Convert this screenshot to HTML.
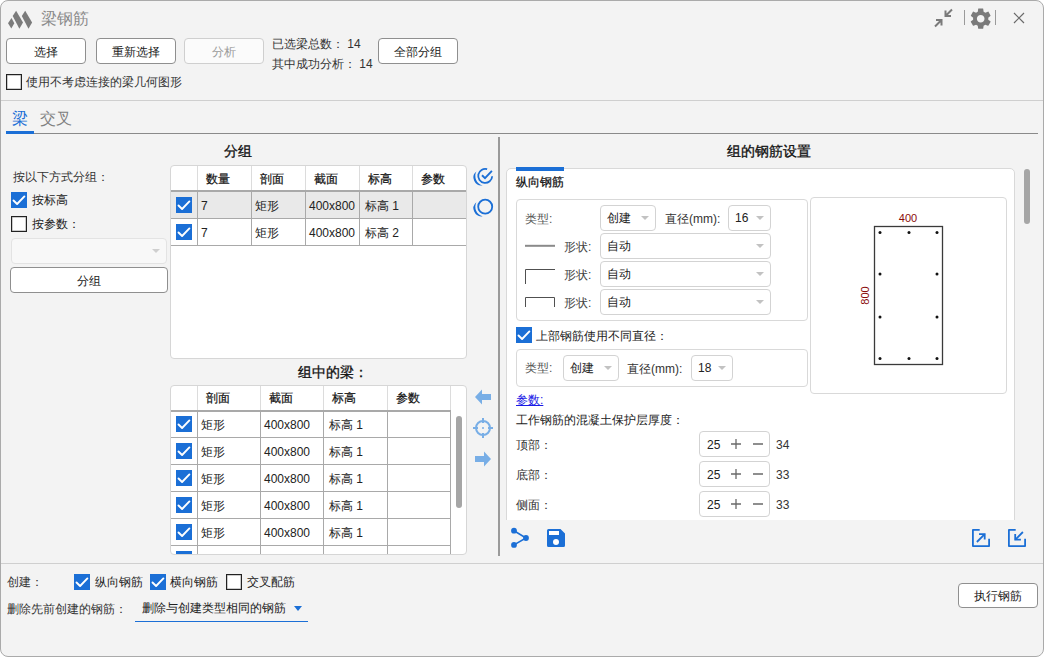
<!DOCTYPE html>
<html><head><meta charset="utf-8">
<style>
html,body{margin:0;padding:0;background:#fff;width:1044px;height:657px;overflow:hidden}
body{font-family:"Liberation Sans",sans-serif;font-size:12px;color:#1f1f1f;position:relative}
.a{position:absolute}
.t{position:absolute;white-space:nowrap;line-height:16px}
#win{position:absolute;left:0;top:0;width:1042px;height:655px;background:#f3f3f3;border:1px solid #aaaaaa;border-radius:8px;overflow:hidden}
.btn{position:absolute;box-sizing:border-box;background:#fff;border:1px solid #8f8f8f;border-radius:4px;text-align:center;line-height:24px;padding-top:1px;font-size:12px;color:#1a1a1a}
.btn.dis{border-color:#cfcfcf;background:#fbfbfb;color:#9a9a9a}
.cb{position:absolute;box-sizing:border-box;width:16px;height:16px;border:1px solid #222;box-shadow:inset 0 0 0 0.5px #999;background:#fff}
.cb.on{background:#1b6fd6;border:none;box-shadow:none}
.cb.on svg{position:absolute;left:0;top:0}
.hl{position:absolute;height:1px;background:#cfcfcf}
.card{position:absolute;box-sizing:border-box;background:#fff;border:1px solid #d9d9d9;border-radius:4px}
.combo{position:absolute;box-sizing:border-box;background:#fff;border:1px solid #d3d3d3;border-radius:4px;line-height:23px;padding-left:6px;padding-top:1px;color:#222}
.arr{position:absolute;top:10px;width:0;height:0;border-left:4px solid transparent;border-right:4px solid transparent;border-top:4px solid #c2c2c2}
.grid{position:absolute;box-sizing:border-box;background:#fff;border:1px solid #d6d6d6;border-radius:4px;overflow:hidden}
.vl{position:absolute;width:1px;background:#a9a9a9}
.hr{position:absolute;height:1px;background:#a9a9a9}
.bold{font-weight:bold}
</style></head><body>
<div id="win">
</div>
<svg class="a" style="left:7px;top:9.5px" width="27" height="20" viewBox="-1 0 27 20">
<path d="M0 13.3 L3.5 7.9 L6.3 13.2 L3.3 18.6 Z" fill="#7b7b7b"/>
<path d="M8.1 0.8 L4.7 6.1 L11.4 18.8 L15 12.6 Z" fill="#7b7b7b"/>
<path d="M17.2 0.8 L13.8 6.1 L20.5 18.8 L24.1 12.6 Z" fill="#7b7b7b"/>
</svg>
<div class="t" style="left:41px;top:10px;font-size:16px;line-height:18px;color:#8a8a8a">梁钢筋</div>
<svg class="a" style="left:933px;top:8px" width="20" height="20" viewBox="0 0 20 20">
<path d="M19 1.5 L13 7.5 M12.5 2.5 V8 H18" fill="none" stroke="#7a7a7a" stroke-width="2"/>
<path d="M2 18.5 L8 12.5 M3 12 H8.5 V17.5" fill="none" stroke="#7a7a7a" stroke-width="2"/>
</svg>
<div class="a" style="left:964px;top:10px;width:1px;height:15px;background:#9a9a9a"></div>
<svg class="a" style="left:967.7px;top:5.7px" width="25.4" height="25.4" viewBox="0 0 24 24">
<path fill="#7a7a7a" d="M19.14 12.94c.04-.3.06-.61.06-.94 0-.32-.02-.64-.07-.94l2.03-1.58c.18-.14.23-.41.12-.61l-1.92-3.32c-.12-.22-.37-.29-.59-.22l-2.39.96c-.5-.38-1.03-.7-1.62-.94l-.36-2.54c-.04-.24-.24-.41-.48-.41h-3.84c-.24 0-.43.17-.47.41l-.36 2.54c-.59.24-1.13.57-1.62.94l-2.39-.96c-.22-.08-.47 0-.59.22L2.74 8.87c-.12.21-.08.47.12.61l2.03 1.58c-.05.3-.09.63-.09.94s.02.64.07.94l-2.03 1.58c-.18.14-.23.41-.12.61l1.92 3.32c.12.22.37.29.59.22l2.390-.96c.5.38 1.03.7 1.62.94l.36 2.54c.05.24.24.41.48.41h3.84c.24 0 .44-.17.47-.41l.36-2.54c.59-.24 1.13-.56 1.62-.94l2.39.96c.22.08.47 0 .59-.22l1.92-3.32c.12-.22.07-.47-.12-.61l-2.01-1.58zM12 15.6c-1.98 0-3.6-1.62-3.6-3.6s1.62-3.6 3.6-3.6 3.6 1.62 3.6 3.6-1.62 3.6-3.6 3.6z"/>
</svg>
<div class="a" style="left:995px;top:10px;width:1px;height:15px;background:#9a9a9a"></div>
<svg class="a" style="left:1013px;top:12px" width="12" height="12" viewBox="0 0 12 12">
<path d="M1 1 L11 11 M11 1 L1 11" stroke="#6a6a6a" stroke-width="1.2" fill="none"/>
</svg>
<div class="btn" style="left:6px;top:38px;width:80px;height:26px">选择</div>
<div class="btn" style="left:96px;top:38px;width:80px;height:26px">重新选择</div>
<div class="btn dis" style="left:184px;top:38px;width:80px;height:26px">分析</div>
<div class="t" style="left:272px;top:36px;color:#333">已选梁总数： 14</div>
<div class="t" style="left:272px;top:56px;color:#333">其中成功分析： 14</div>
<div class="btn" style="left:378px;top:38px;width:80px;height:26px">全部分组</div>
<div class="cb" style="left:6px;top:74px"></div>
<div class="t" style="left:26px;top:74px;color:#333">使用不考虑连接的梁几何图形</div>
<div class="hl" style="left:1px;top:100px;width:1042px"></div>
<div class="t" style="left:12px;top:110px;font-size:16px;line-height:18px;color:#1b6fd6">梁</div>
<div class="t" style="left:40px;top:110px;font-size:16px;line-height:18px;color:#808080">交叉</div>
<div class="a" style="left:6px;top:133px;width:1032px;height:1px;background:#8a8a8a"></div>
<div class="a" style="left:6px;top:131px;width:28px;height:3px;background:#1b6fd6"></div>
<div class="t bold" style="left:224px;top:143px;font-size:13.7px;line-height:18px;color:#111;font-weight:400;-webkit-text-stroke:0.3px #111">分组</div>
<div class="t" style="left:13px;top:169px;color:#333">按以下方式分组：</div>
<div class="cb on" style="left:11px;top:192px"><svg width="16" height="16" viewBox="0 0 16 16"><path d="M2.5 8.5 L6.1 12 L13.4 4.4" fill="none" stroke="#fff" stroke-width="1.9" stroke-linecap="round" stroke-linejoin="round"/></svg></div>
<div class="t" style="left:32px;top:192px;color:#222">按标高</div>
<div class="cb" style="left:11px;top:216px"></div>
<div class="t" style="left:32px;top:216px;color:#222">按参数：</div>
<div class="combo" style="left:11px;top:238px;width:156px;height:26px;background:#f8f8f8;border-color:#e3e3e3"><div class="arr" style="left:140px;top:10px;border-top-color:#cfcfcf"></div></div>
<div class="btn" style="left:10px;top:267px;width:158px;height:26px">分组</div>
<div class="grid" style="left:170px;top:165px;width:297px;height:194px">
<div class="vl" style="left:26px;top:0;height:25px;background:#dcdcdc"></div>
<div class="vl" style="left:80px;top:0;height:25px;background:#dcdcdc"></div>
<div class="vl" style="left:134px;top:0;height:25px;background:#dcdcdc"></div>
<div class="vl" style="left:188px;top:0;height:25px;background:#dcdcdc"></div>
<div class="vl" style="left:241px;top:0;height:25px;background:#dcdcdc"></div>
<div class="hr" style="left:0;top:24px;width:296px;height:2px;background:#a9a9a9"></div>
<div class="a" style="left:0;top:26px;width:296px;height:26px;background:#e9e9e9"></div>
<div class="hr" style="left:0;top:52px;width:296px"></div>
<div class="hr" style="left:0;top:79px;width:296px"></div>
<div class="vl" style="left:26px;top:25px;height:55px"></div>
<div class="vl" style="left:80px;top:25px;height:55px"></div>
<div class="vl" style="left:134px;top:25px;height:55px"></div>
<div class="vl" style="left:188px;top:25px;height:55px"></div>
<div class="vl" style="left:241px;top:25px;height:55px"></div>
<div class="vl" style="left:295px;top:25px;height:55px"></div>
</div>
<div class="t" style="left:206px;top:171px;color:#111;-webkit-text-stroke:0.2px #111">数量</div>
<div class="t" style="left:260px;top:171px;color:#111;-webkit-text-stroke:0.2px #111">剖面</div>
<div class="t" style="left:314px;top:171px;color:#111;-webkit-text-stroke:0.2px #111">截面</div>
<div class="t" style="left:368px;top:171px;color:#111;-webkit-text-stroke:0.2px #111">标高</div>
<div class="t" style="left:421px;top:171px;color:#111;-webkit-text-stroke:0.2px #111">参数</div>
<div class="cb on" style="left:176px;top:197px"><svg width="16" height="16" viewBox="0 0 16 16"><path d="M2.5 8.5 L6.1 12 L13.4 4.4" fill="none" stroke="#fff" stroke-width="1.9" stroke-linecap="round" stroke-linejoin="round"/></svg></div>
<div class="t" style="left:201px;top:198px;color:#222">7</div>
<div class="t" style="left:255px;top:198px;color:#222">矩形</div>
<div class="t" style="left:309px;top:198px;color:#222">400x800</div>
<div class="t" style="left:365px;top:198px;color:#222">标高 1</div>
<div class="cb on" style="left:176px;top:224px"><svg width="16" height="16" viewBox="0 0 16 16"><path d="M2.5 8.5 L6.1 12 L13.4 4.4" fill="none" stroke="#fff" stroke-width="1.9" stroke-linecap="round" stroke-linejoin="round"/></svg></div>
<div class="t" style="left:201px;top:225px;color:#222">7</div>
<div class="t" style="left:255px;top:225px;color:#222">矩形</div>
<div class="t" style="left:309px;top:225px;color:#222">400x800</div>
<div class="t" style="left:365px;top:225px;color:#222">标高 2</div>
<svg class="a" style="left:470px;top:162px" width="28" height="60" viewBox="470 162 28 60">
<path d="M476.38 171.41 A7.99 7.99 0 0 0 482.64 185.46 A9.9 9.9 0 0 1 476.38 171.41 Z" fill="#1b6fd6"/>
<path d="M492.19 176.27 A7 7 0 1 1 487.13 169.17" fill="none" stroke="#1b6fd6" stroke-width="1.8"/>
<path d="M482 175.2 L485 178.1 L491.9 170.9" fill="none" stroke="#1b6fd6" stroke-width="1.9"/>
<path d="M476.38 202.21 A7.99 7.99 0 0 0 482.64 216.26 A9.9 9.9 0 0 1 476.38 202.21 Z" fill="#1b6fd6"/>
<circle cx="485.2" cy="206.7" r="7" fill="none" stroke="#1b6fd6" stroke-width="1.8"/>
</svg>
<div class="t bold" style="left:298px;top:364px;font-size:13.7px;line-height:18px;color:#111;font-weight:400;-webkit-text-stroke:0.3px #111">组中的梁：</div>
<div class="grid" style="left:170px;top:385px;width:297px;height:170px">
<div class="vl" style="left:26px;top:0;height:25px;background:#dcdcdc"></div>
<div class="vl" style="left:89px;top:0;height:25px;background:#dcdcdc"></div>
<div class="vl" style="left:152px;top:0;height:25px;background:#dcdcdc"></div>
<div class="vl" style="left:216px;top:0;height:25px;background:#dcdcdc"></div>
<div class="vl" style="left:279px;top:0;height:25px;background:#dcdcdc"></div>
<div class="hr" style="left:0;top:24px;width:280px;height:2px"></div>
<div class="hr" style="left:0;top:51px;width:280px"></div>
<div class="hr" style="left:0;top:78px;width:280px"></div>
<div class="hr" style="left:0;top:105px;width:280px"></div>
<div class="hr" style="left:0;top:132px;width:280px"></div>
<div class="hr" style="left:0;top:159px;width:280px"></div>
<div class="hr" style="left:0;top:186px;width:280px"></div>
<div class="vl" style="left:26px;top:25px;height:150px"></div>
<div class="vl" style="left:89px;top:25px;height:150px"></div>
<div class="vl" style="left:152px;top:25px;height:150px"></div>
<div class="vl" style="left:216px;top:25px;height:150px"></div>
<div class="vl" style="left:279px;top:25px;height:150px"></div>
<div class="vl" style="left:295px;top:25px;height:150px"></div>
<div class="a" style="left:285px;top:30px;width:6px;height:92px;border-radius:3px;background:#a6a6a6"></div>
</div>
<div class="t" style="left:206px;top:390px;color:#111;-webkit-text-stroke:0.2px #111">剖面</div>
<div class="t" style="left:269px;top:390px;color:#111;-webkit-text-stroke:0.2px #111">截面</div>
<div class="t" style="left:332px;top:390px;color:#111;-webkit-text-stroke:0.2px #111">标高</div>
<div class="t" style="left:396px;top:390px;color:#111;-webkit-text-stroke:0.2px #111">参数</div>
<div class="a" style="left:170px;top:410px;width:297px;height:27px;overflow:hidden;clip-path:inset(0 0 0px 0)">
<div class="cb on" style="left:6px;top:6px"><svg width="16" height="16" viewBox="0 0 16 16"><path d="M2.5 8.5 L6.1 12 L13.4 4.4" fill="none" stroke="#fff" stroke-width="1.9" stroke-linecap="round" stroke-linejoin="round"/></svg></div>
<div class="t" style="left:31px;top:7px;color:#222">矩形</div>
<div class="t" style="left:94px;top:7px;color:#222">400x800</div>
<div class="t" style="left:159px;top:7px;color:#222">标高 1</div>
</div>
<div class="a" style="left:170px;top:437px;width:297px;height:27px;overflow:hidden;clip-path:inset(0 0 0px 0)">
<div class="cb on" style="left:6px;top:6px"><svg width="16" height="16" viewBox="0 0 16 16"><path d="M2.5 8.5 L6.1 12 L13.4 4.4" fill="none" stroke="#fff" stroke-width="1.9" stroke-linecap="round" stroke-linejoin="round"/></svg></div>
<div class="t" style="left:31px;top:7px;color:#222">矩形</div>
<div class="t" style="left:94px;top:7px;color:#222">400x800</div>
<div class="t" style="left:159px;top:7px;color:#222">标高 1</div>
</div>
<div class="a" style="left:170px;top:464px;width:297px;height:27px;overflow:hidden;clip-path:inset(0 0 0px 0)">
<div class="cb on" style="left:6px;top:6px"><svg width="16" height="16" viewBox="0 0 16 16"><path d="M2.5 8.5 L6.1 12 L13.4 4.4" fill="none" stroke="#fff" stroke-width="1.9" stroke-linecap="round" stroke-linejoin="round"/></svg></div>
<div class="t" style="left:31px;top:7px;color:#222">矩形</div>
<div class="t" style="left:94px;top:7px;color:#222">400x800</div>
<div class="t" style="left:159px;top:7px;color:#222">标高 1</div>
</div>
<div class="a" style="left:170px;top:491px;width:297px;height:27px;overflow:hidden;clip-path:inset(0 0 0px 0)">
<div class="cb on" style="left:6px;top:6px"><svg width="16" height="16" viewBox="0 0 16 16"><path d="M2.5 8.5 L6.1 12 L13.4 4.4" fill="none" stroke="#fff" stroke-width="1.9" stroke-linecap="round" stroke-linejoin="round"/></svg></div>
<div class="t" style="left:31px;top:7px;color:#222">矩形</div>
<div class="t" style="left:94px;top:7px;color:#222">400x800</div>
<div class="t" style="left:159px;top:7px;color:#222">标高 1</div>
</div>
<div class="a" style="left:170px;top:518px;width:297px;height:27px;overflow:hidden;clip-path:inset(0 0 0px 0)">
<div class="cb on" style="left:6px;top:6px"><svg width="16" height="16" viewBox="0 0 16 16"><path d="M2.5 8.5 L6.1 12 L13.4 4.4" fill="none" stroke="#fff" stroke-width="1.9" stroke-linecap="round" stroke-linejoin="round"/></svg></div>
<div class="t" style="left:31px;top:7px;color:#222">矩形</div>
<div class="t" style="left:94px;top:7px;color:#222">400x800</div>
<div class="t" style="left:159px;top:7px;color:#222">标高 1</div>
</div>
<div class="a" style="left:170px;top:545px;width:297px;height:27px;overflow:hidden;clip-path:inset(0 0 18px 0)">
<div class="cb on" style="left:6px;top:6px"><svg width="16" height="16" viewBox="0 0 16 16"><path d="M2.5 8.5 L6.1 12 L13.4 4.4" fill="none" stroke="#fff" stroke-width="1.9" stroke-linecap="round" stroke-linejoin="round"/></svg></div>
</div>
<svg class="a" style="left:474px;top:389px" width="18" height="16" viewBox="0 0 18 16">
<path d="M1 8 L8 0.5 V5 H17 V11 H8 V15.5 Z" fill="#78aee6"/></svg>
<svg class="a" style="left:472px;top:417px" width="22" height="22" viewBox="0 0 22 22">
<circle cx="11" cy="11" r="7" fill="none" stroke="#78aee6" stroke-width="2"/>
<path d="M11 1 V6 M11 16 V21 M1 11 H6 M16 11 H21" stroke="#78aee6" stroke-width="2"/>
<circle cx="11" cy="11" r="1" fill="#78aee6"/></svg>
<svg class="a" style="left:474px;top:451px" width="18" height="16" viewBox="0 0 18 16">
<path d="M17 8 L10 0.5 V5 H1 V11 H10 V15.5 Z" fill="#78aee6"/></svg>
<div class="a" style="left:498px;top:137px;width:2px;height:419px;background:#9a9a9a"></div>
<div class="t bold" style="left:727px;top:143px;font-size:13.7px;line-height:18px;color:#111;font-weight:400;-webkit-text-stroke:0.3px #111">组的钢筋设置</div>
<div class="a" style="left:506px;top:167px;width:509px;height:353px;overflow:hidden">
<div class="card" style="left:0;top:1px;width:509px;height:420px;border-radius:5px"></div>
<div class="a" style="left:10px;top:0;width:48px;height:4px;background:#1b6fd6"></div>
</div>
<div class="t" style="left:516px;top:174px;color:#111;-webkit-text-stroke:0.25px #111">纵向钢筋</div>
<div class="card" style="left:516px;top:199px;width:292px;height:122px"></div>
<div class="t" style="left:525px;top:211px;color:#555">类型:</div>
<div class="combo" style="left:600px;top:205px;width:56px;height:26px">创建<div class="arr" style="left:40px"></div></div>
<div class="t" style="left:665px;top:211px;color:#333">直径(mm):</div>
<div class="combo" style="left:728px;top:205px;width:43px;height:26px">16<div class="arr" style="left:27px"></div></div>
<svg class="a" style="left:524px;top:238px" width="32" height="70" viewBox="0 0 32 70"><path d="M1 7.8 H31" stroke="#8a8a8a" stroke-width="2" fill="none"/><path d="M1.5 46 V31.5 H31" stroke="#505050" stroke-width="1" fill="none"/><path d="M1.5 69 V59.5 H30.5 V69" stroke="#505050" stroke-width="1" fill="none"/></svg>
<div class="t" style="left:564px;top:239px;color:#444">形状:</div>
<div class="combo" style="left:600px;top:233px;width:171px;height:26px">自动<div class="arr" style="left:155px"></div></div>
<div class="t" style="left:564px;top:267px;color:#444">形状:</div>
<div class="combo" style="left:600px;top:261px;width:171px;height:26px">自动<div class="arr" style="left:155px"></div></div>
<div class="t" style="left:564px;top:295px;color:#444">形状:</div>
<div class="combo" style="left:600px;top:289px;width:171px;height:26px">自动<div class="arr" style="left:155px"></div></div>
<div class="card" style="left:810px;top:197px;width:197px;height:197px"></div>
<svg class="a" style="left:810px;top:197px" width="197" height="197" viewBox="810 197 197 197"><rect x="874.5" y="226.5" width="68" height="138" fill="none" stroke="#3a3a3a" stroke-width="1.3"/><circle cx="880" cy="232.5" r="1.5" fill="#111"/><circle cx="880" cy="358.5" r="1.5" fill="#111"/><circle cx="909" cy="232.5" r="1.5" fill="#111"/><circle cx="909" cy="358.5" r="1.5" fill="#111"/><circle cx="937" cy="232.5" r="1.5" fill="#111"/><circle cx="937" cy="358.5" r="1.5" fill="#111"/><circle cx="880" cy="274" r="1.5" fill="#111"/><circle cx="880" cy="317" r="1.5" fill="#111"/><circle cx="937" cy="274" r="1.5" fill="#111"/><circle cx="937" cy="317" r="1.5" fill="#111"/><text x="908" y="222" font-size="11" fill="#8b0a0a" text-anchor="middle" font-family="Liberation Sans">400</text><text x="0" y="0" font-size="11" fill="#8b0a0a" text-anchor="middle" font-family="Liberation Sans" transform="translate(869 295.5) rotate(-90)">800</text></svg>
<div class="cb on" style="left:516px;top:327px"><svg width="16" height="16" viewBox="0 0 16 16"><path d="M2.5 8.5 L6.1 12 L13.4 4.4" fill="none" stroke="#fff" stroke-width="1.9" stroke-linecap="round" stroke-linejoin="round"/></svg></div>
<div class="t" style="left:536px;top:328px;color:#222">上部钢筋使用不同直径：</div>
<div class="card" style="left:516px;top:349px;width:292px;height:38px"></div>
<div class="t" style="left:525px;top:360px;color:#555">类型:</div>
<div class="combo" style="left:563px;top:355px;width:56px;height:26px">创建<div class="arr" style="left:40px"></div></div>
<div class="t" style="left:627px;top:361px;color:#333">直径(mm):</div>
<div class="combo" style="left:691px;top:355px;width:42px;height:26px">18<div class="arr" style="left:26px"></div></div>
<div class="t" style="left:516px;top:392px;color:#1a1ae6;text-decoration:underline">参数:</div>
<div class="t" style="left:516px;top:412px;color:#222">工作钢筋的混凝土保护层厚度：</div>
<div class="t" style="left:516px;top:437px;color:#333">顶部：</div>
<div class="combo" style="left:699px;top:431px;width:71px;height:26px;padding-left:7px;padding-top:2px">25</div>
<svg class="a" style="left:729px;top:438px" width="36" height="12" viewBox="0 0 36 12"><path d="M7 1 V11 M2 6 H12 M24 6 H34" stroke="#6a6a6a" stroke-width="1.3" fill="none"/></svg>
<div class="t" style="left:776px;top:437px;color:#333">34</div>
<div class="t" style="left:516px;top:467px;color:#333">底部：</div>
<div class="combo" style="left:699px;top:461px;width:71px;height:26px;padding-left:7px;padding-top:2px">25</div>
<svg class="a" style="left:729px;top:468px" width="36" height="12" viewBox="0 0 36 12"><path d="M7 1 V11 M2 6 H12 M24 6 H34" stroke="#6a6a6a" stroke-width="1.3" fill="none"/></svg>
<div class="t" style="left:776px;top:467px;color:#333">33</div>
<div class="t" style="left:516px;top:497px;color:#333">侧面：</div>
<div class="combo" style="left:699px;top:491px;width:71px;height:26px;padding-left:7px;padding-top:2px">25</div>
<svg class="a" style="left:729px;top:498px" width="36" height="12" viewBox="0 0 36 12"><path d="M7 1 V11 M2 6 H12 M24 6 H34" stroke="#6a6a6a" stroke-width="1.3" fill="none"/></svg>
<div class="t" style="left:776px;top:497px;color:#333">33</div>
<div class="a" style="left:500px;top:520px;width:540px;height:42px;background:#f3f3f3"></div>
<div class="a" style="left:1024px;top:169px;width:6px;height:55px;border-radius:3px;background:#a6a6a6"></div>
<svg class="a" style="left:508px;top:526px" width="24" height="22" viewBox="0 0 24 22">
<path d="M6 4.7 L18 12 L6 18.9" fill="none" stroke="#1b6fd6" stroke-width="1.6"/>
<circle cx="6" cy="4.7" r="2.9" fill="#1b6fd6"/><circle cx="18" cy="12" r="2.9" fill="#1b6fd6"/><circle cx="6" cy="18.9" r="2.9" fill="#1b6fd6"/>
</svg>
<svg class="a" style="left:547px;top:529px" width="18" height="18" viewBox="0 0 18 18">
<path d="M1.5 0 H13.5 L18 4.5 V16.5 A1.5 1.5 0 0 1 16.5 18 H1.5 A1.5 1.5 0 0 1 0 16.5 V1.5 A1.5 1.5 0 0 1 1.5 0 Z" fill="#1b6fd6"/>
<rect x="2" y="2" width="10" height="4" fill="#fff"/><circle cx="9" cy="13" r="3" fill="#fff"/>
</svg>
<svg class="a" style="left:971px;top:528px" width="20" height="20" viewBox="0 0 20 20">
<path d="M8.7 1.9 H1.9 V18.1 H18.1 V10.7" fill="none" stroke="#1b6fd6" stroke-width="1.8" stroke-linejoin="round"/>
<path d="M5.9 14 L13.7 6.2" stroke="#1b6fd6" stroke-width="1.8"/><path d="M8 6.2 H13.7 V11.5" fill="none" stroke="#1b6fd6" stroke-width="1.8"/>
</svg>
<svg class="a" style="left:1007px;top:528px" width="20" height="20" viewBox="0 0 20 20">
<path d="M8.7 1.9 H1.9 V18.1 H18.1 V10.7" fill="none" stroke="#1b6fd6" stroke-width="1.8" stroke-linejoin="round"/>
<path d="M15.9 4 L8.2 11.7" stroke="#1b6fd6" stroke-width="1.8"/><path d="M8.2 5.9 V11.7 H13.9" fill="none" stroke="#1b6fd6" stroke-width="1.8"/>
</svg>
<div class="hl" style="left:1px;top:563px;width:1042px"></div>
<div class="t" style="left:7px;top:574px;color:#333">创建：</div>
<div class="cb on" style="left:74px;top:574px"><svg width="16" height="16" viewBox="0 0 16 16"><path d="M2.5 8.5 L6.1 12 L13.4 4.4" fill="none" stroke="#fff" stroke-width="1.9" stroke-linecap="round" stroke-linejoin="round"/></svg></div>
<div class="t" style="left:95px;top:574px;color:#222">纵向钢筋</div>
<div class="cb on" style="left:150px;top:574px"><svg width="16" height="16" viewBox="0 0 16 16"><path d="M2.5 8.5 L6.1 12 L13.4 4.4" fill="none" stroke="#fff" stroke-width="1.9" stroke-linecap="round" stroke-linejoin="round"/></svg></div>
<div class="t" style="left:170px;top:574px;color:#222">横向钢筋</div>
<div class="cb" style="left:226px;top:574px"></div>
<div class="t" style="left:247px;top:574px;color:#222">交叉配筋</div>
<div class="t" style="left:7px;top:601px;color:#333">删除先前创建的钢筋：</div>
<div class="t" style="left:142px;top:600px;color:#222">删除与创建类型相同的钢筋</div>
<div class="a" style="left:135px;top:621px;width:173px;height:1px;background:#1b6fd6"></div>
<div class="a" style="left:294px;top:606px;width:0;height:0;border-left:4px solid transparent;border-right:4px solid transparent;border-top:5px solid #1b6fd6"></div>
<div class="btn" style="left:958px;top:583px;width:80px;height:25px;line-height:23px">执行钢筋</div>
</body></html>
